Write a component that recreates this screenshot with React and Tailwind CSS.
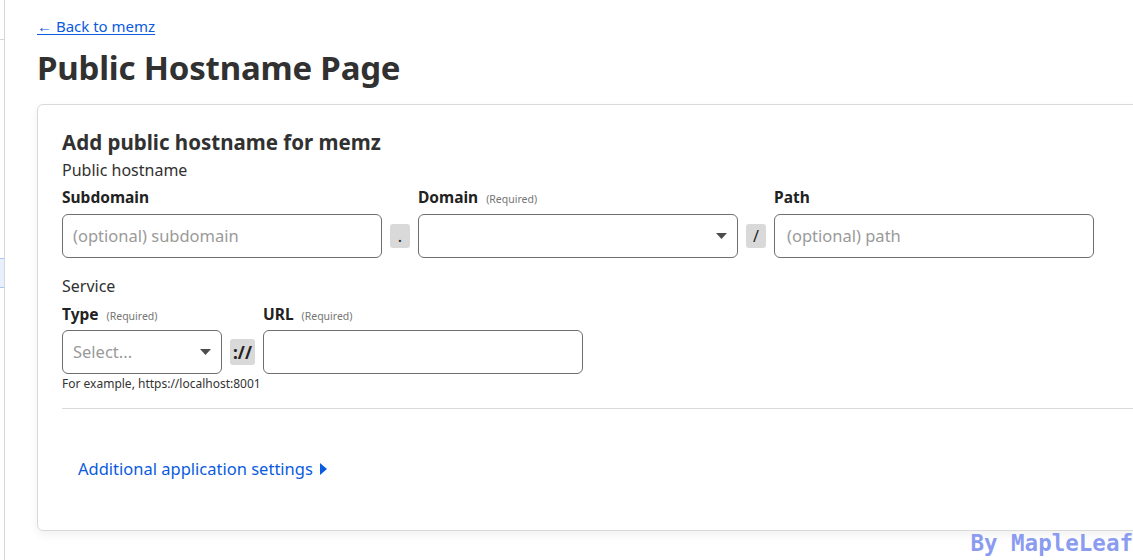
import React from 'react';

const FONT = { fontFamily: '"Noto Sans", "Open Sans", Arial, sans-serif' };

function Caret() {
  return (
    <svg width="11" height="6" viewBox="0 0 11 6" className="shrink-0">
      <path d="M0 0h11L5.5 6z" fill="#4d4d4d" />
    </svg>
  );
}

function Label({ text, required }) {
  return (
    <div className="flex items-baseline gap-2 h-[24px]">
      <span className="text-[15.5px] font-bold text-[#222]">{text}</span>
      {required && <span className="text-[10.5px] text-[#757575]">(Required)</span>}
    </div>
  );
}

function Sep({ children, w = 'w-[20px]', h = 'h-[24px]', top = 'mt-[28px]' }) {
  return (
    <div className={`${top} h-[44px] flex items-center shrink-0`}>
      <div className={`${w} ${h} rounded-[3px] bg-[#d9d9d9] flex items-center justify-center text-[16px] text-[#222] leading-none`}>
        {children}
      </div>
    </div>
  );
}

export default function App() {
  return (
    <div className="h-[560px] w-[1133px] overflow-hidden bg-white flex text-[#313131]" style={FONT}>
      {/* sidebar sliver */}
      <div className="w-[5px] shrink-0 border-r border-[#d6d6d6] flex flex-col">
        <div className="h-[40px] border-b border-[#d6d6d6]" />
        <div className="h-[218px]" />
        <div className="h-[30px] bg-[#e8f0fe] border-y border-[#a9c5f5]" />
      </div>

      <div className="flex-1 pl-[32px] pt-[14px] relative min-w-0">
        <a href="#" className="text-[15px] text-[#0a5be0] underline underline-offset-2">← Back to memz</a>
        <h1 className="mt-[8px] text-[33px] font-bold text-[#313131] leading-[44px] tracking-[-0.2px]">Public Hostname Page</h1>

        <div className="mt-[14px] w-[1130px] h-[427px] border border-[#d9d9d9] rounded-[6px] shadow-[0_4px_10px_rgba(0,0,0,0.06)] pl-[24px] pt-[23px]">
          <h2 className="text-[20.5px] font-bold leading-[28px] text-[#313131]">Add public hostname for memz</h2>
          <div className="text-[16px] leading-[22px] mt-[3px]">Public hostname</div>

          <div className="flex gap-[8px] mt-[5px]">
            <div className="w-[320px]">
              <Label text="Subdomain" />
              <div className="mt-[4px] h-[44px] border border-[#6e6e6e] rounded-[6px] px-[10px] flex items-center text-[16.5px] text-[#9a9a9a]">(optional) subdomain</div>
            </div>
            <Sep>.</Sep>
            <div className="w-[320px]">
              <Label text="Domain" required />
              <div className="mt-[4px] h-[44px] border border-[#6e6e6e] rounded-[6px] pl-[10px] pr-[10px] flex items-center justify-end">
                <Caret />
              </div>
            </div>
            <Sep>/</Sep>
            <div className="w-[320px]">
              <Label text="Path" />
              <div className="mt-[4px] h-[44px] border border-[#6e6e6e] rounded-[6px] px-[12px] flex items-center text-[16.5px] text-[#9a9a9a]">(optional) path</div>
            </div>
          </div>

          <div className="text-[16px] leading-[22px] mt-[17px]">Service</div>
          <div className="flex gap-[8px] mt-[6px]">
            <div className="w-[160px]">
              <Label text="Type" required />
              <div className="mt-[3px] h-[44px] border border-[#6e6e6e] rounded-[6px] pl-[10px] pr-[10px] flex items-center justify-between text-[16.5px] text-[#9a9a9a]">
                <span>Select...</span>
                <Caret />
              </div>
            </div>
            <Sep w="w-[25px]" h="h-[26px]" top="mt-[27px]"><span className="font-bold text-[17px]">://</span></Sep>
            <div className="w-[320px]">
              <Label text="URL" required />
              <div className="mt-[3px] h-[44px] border border-[#6e6e6e] rounded-[6px]" />
            </div>
          </div>
          <div className="text-[12px] leading-[16px] mt-[2px] text-[#333]">For example, https://localhost:8001</div>

          <div className="mt-[16px] border-t border-[#d9d9d9]" />

          <button className="mt-[48px] ml-[16px] flex items-center gap-[7px] text-[16.5px] text-[#0a5be0]">
            <span>Additional application settings</span>
            <svg width="7" height="12" viewBox="0 0 7 12"><path d="M0 0l7 6-7 6z" fill="#0a5be0" /></svg>
          </button>
        </div>

        <div className="absolute right-0 bottom-[-1px] text-[22.5px] font-bold text-[#8b9cf0]" style={{ fontFamily: '"DejaVu Sans Mono", monospace' }}>By MapleLeaf</div>
      </div>
    </div>
  );
}
